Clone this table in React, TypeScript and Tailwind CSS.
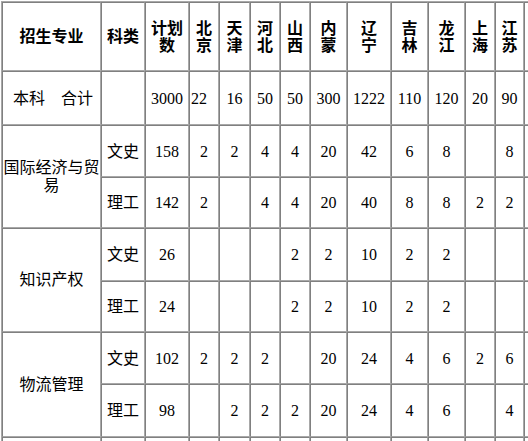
import React from "react";

const provinces = [
  ["北", "京"],
  ["天", "津"],
  ["河", "北"],
  ["山", "西"],
  ["内", "蒙"],
  ["辽", "宁"],
  ["吉", "林"],
  ["龙", "江"],
  ["上", "海"],
  ["江", "苏"],
];

const widths = [99, 44, 44, 30, 31, 30, 30, 37, 44, 37, 37, 30, 29, 60];

type Major = {
  name: string;
  rows: { kind: string; h: number; cells: string[] }[];
};

const majors: Major[] = [
  {
    name: "国际经济与贸易",
    rows: [
      { kind: "文史", h: 52, cells: ["158", "2", "2", "4", "4", "20", "42", "6", "8", "", "8"] },
      { kind: "理工", h: 51, cells: ["142", "2", "", "4", "4", "20", "40", "8", "8", "2", "2"] },
    ],
  },
  {
    name: "知识产权",
    rows: [
      { kind: "文史", h: 53, cells: ["26", "", "", "", "2", "2", "10", "2", "2", "", ""] },
      { kind: "理工", h: 51, cells: ["24", "", "", "", "2", "2", "10", "2", "2", "", ""] },
    ],
  },
  {
    name: "物流管理",
    rows: [
      { kind: "文史", h: 52, cells: ["102", "2", "2", "2", "", "20", "24", "4", "6", "2", "6"] },
      { kind: "理工", h: 53, cells: ["98", "", "2", "2", "2", "20", "24", "4", "6", "", "4"] },
    ],
  },
];

const cell =
  "border border-t-[#808080] border-l-[#808080] border-r-[#a8a8a8] border-b-[#a8a8a8] p-px text-center align-middle";

export default function App() {
  return (
    <div className="w-[528px] h-[441px] overflow-hidden bg-white">
      <table
        className="ml-px mt-px table-fixed border-separate border-spacing-0 border border-t-[#a8a8a8] border-l-[#a8a8a8] border-r-[#808080] border-b-[#808080] text-[16px] leading-[17px] text-black"
        style={{ width: widths.reduce((a, b) => a + b, 0) + 2 }}
      >
        <colgroup>
          {widths.map((w, i) => (
            <col key={i} style={{ width: w }} />
          ))}
        </colgroup>
        <tbody className="font-['Liberation_Serif','Noto_Sans_CJK_SC',serif]">
          <tr>
            <td className={`${cell} h-[69px] font-bold`}>招生专业</td>
            <td className={`${cell} font-bold`}>科类</td>
            <td className={`${cell} font-bold`}>
              计划
              <br />数
            </td>
            {provinces.map(([a, b]) => (
              <td key={a + b} className={`${cell} font-bold`}>
                {a}
                <br />
                {b}
              </td>
            ))}
            <td className={cell}></td>
          </tr>
          <tr>
            <td className={`${cell} h-[54px] !text-left pl-[10px]`}>本科　合计</td>
            <td className={cell}></td>
            <td className={cell}>3000</td>
            <td className={`${cell} !text-left`}>22</td>
            <td className={cell}>16</td>
            <td className={cell}>50</td>
            <td className={cell}>50</td>
            <td className={cell}>300</td>
            <td className={cell}>1222</td>
            <td className={cell}>110</td>
            <td className={cell}>120</td>
            <td className={cell}>20</td>
            <td className={cell}>90</td>
            <td className={cell}></td>
          </tr>
          {majors.map((m) =>
            m.rows.map((r, ri) => (
              <tr key={m.name + r.kind}>
                {ri === 0 && (
                  <td rowSpan={2} className={`${cell} !p-0 leading-[18px]`}>
                    {m.name}
                  </td>
                )}
                <td className={cell} style={{ height: r.h }}>
                  {r.kind}
                </td>
                {r.cells.map((c, ci) => (
                  <td key={ci} className={cell}>
                    {c}
                  </td>
                ))}
                <td className={cell}></td>
              </tr>
            ))
          )}
          <tr>
            <td className={`${cell} h-[52px]`}></td>
            {widths.slice(1).map((_, i) => (
              <td key={i} className={cell}></td>
            ))}
          </tr>
        </tbody>
      </table>
    </div>
  );
}
